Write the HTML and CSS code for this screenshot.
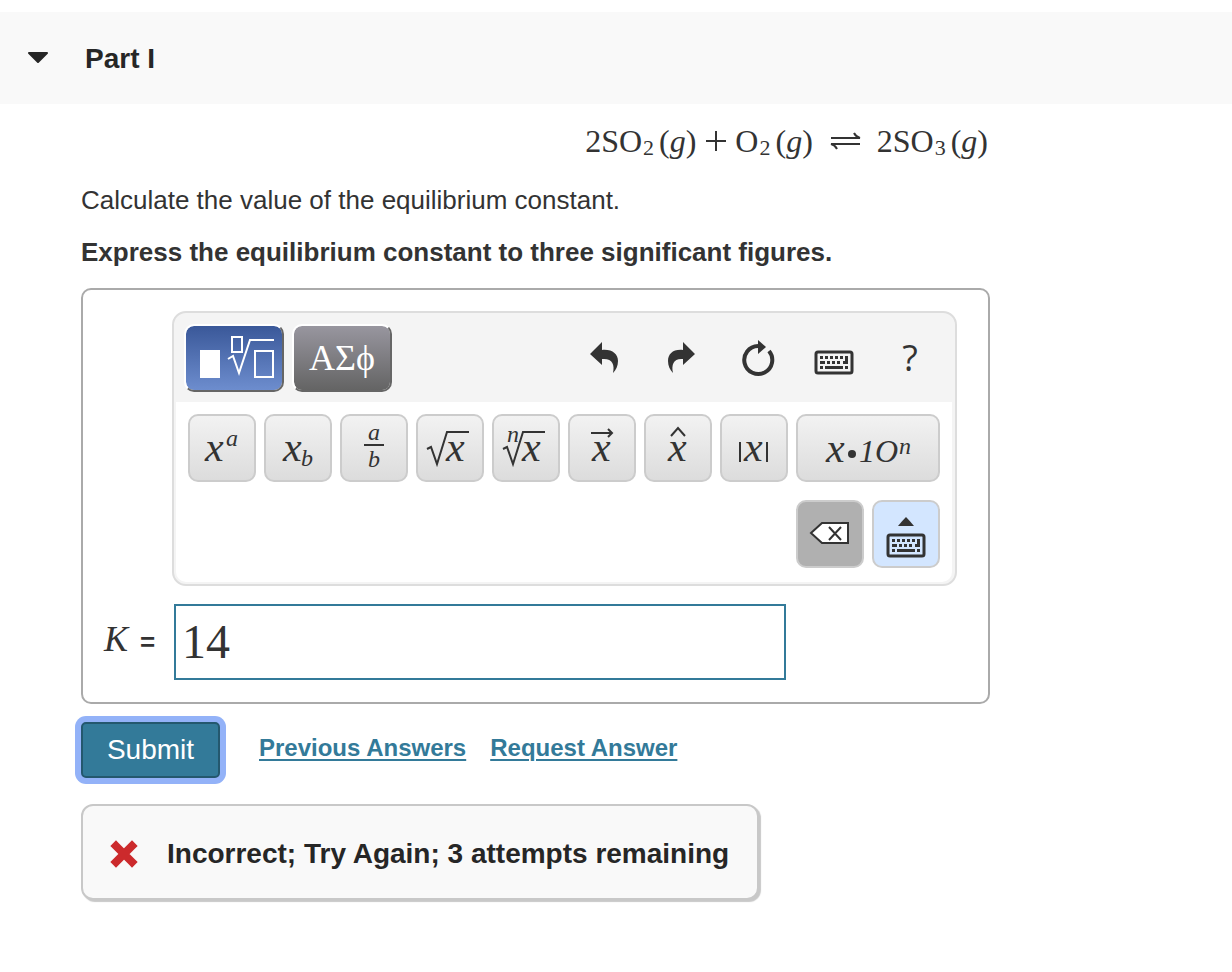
FILE: index.html
```html
<!DOCTYPE html>
<html lang="en">
<head>
<meta charset="utf-8">
<meta name="viewport" content="width=device-width, initial-scale=1">
<title>Part I</title>
<link rel="stylesheet" href="styles.css">
</head>
<body>
<svg class="defs" aria-hidden="true">
  <symbol id="keyboard" viewBox="0 0 40 26">
    <rect x="2" y="2" width="36" height="21" rx="2" fill="none" stroke="currentColor" stroke-width="3"/>
    <path fill="currentColor" d="M6 6h3v3h-3zM11 6h3v3h-3zM16 6h3v3h-3zM21 6h3v3h-3zM26 6h3v3h-3zM31 6h3v8h-5v-3h2zM6 11h5v3H6zM13 11h3v3h-3zM18 11h3v3h-3zM23 11h3v3h-3zM6 16h3v3H6zM11 16h18v3H11zM31 16h3v3h-3z"/>
  </symbol>
</svg>
<header class="part-header">
  <button class="part-toggle" type="button" aria-label="Collapse Part I">
    <svg width="22" height="14" viewBox="0 0 22 14"><path d="M2 2h18l-9 9z" fill="#262626" stroke="#262626" stroke-width="2" stroke-linejoin="round"/></svg>
  </button>
  <h1 class="part-title">Part I</h1>
</header>
<main class="content">
  <div class="equation">
    <span>2SO</span><span class="eq-sub">2</span><span class="eq-state">(<i>g</i>)</span>
    <svg class="eq-plus" width="22" height="22" viewBox="0 0 22 22"><path d="M11 1v20M1 11h20" stroke="#333" stroke-width="2"/></svg>
    <span>O</span><span class="eq-sub">2</span><span class="eq-state">(<i>g</i>)</span>
    <svg class="eq-arrows" width="31" height="18" viewBox="0 0 31 18"><path d="M1 6h29q-4-1-6-5M30 12H1q4 1 6 5" fill="none" stroke="#333" stroke-width="2"/></svg>
    <span>2SO</span><span class="eq-sub">3</span><span class="eq-state">(<i>g</i>)</span>
  </div>
  <p class="prompt">Calculate the value of the equilibrium constant.</p>
  <p class="prompt prompt-strong">Express the equilibrium constant to three significant figures.</p>

  <form class="answer" id="answer">
    <div class="panel">
      <div class="panel-bar">
        <div class="tabs">
          <button class="tab tab-active" type="button" aria-label="Templates">
            <svg width="96" height="64" viewBox="0 0 96 64" fill="none" stroke="#fff" stroke-width="2">
              <rect x="14" y="24" width="20" height="28" fill="#fff" stroke="none"/>
              <rect x="46" y="11" width="10" height="15"/>
              <rect x="69" y="25" width="18" height="26"/>
              <path d="M42 33l5-3 6 17 11-33h24"/>
            </svg>
          </button>
          <button class="tab" type="button">ΑΣϕ</button>
        </div>
        <div class="tools">
          <button class="tool" type="button" aria-label="Undo">
            <svg width="64" height="66" viewBox="0 0 64 66"><path fill="#333" d="M16 29L28 17v8C38 24 44 29 44 36c0 5-2 9-5 12 2-9-1-15-11-14v6z"/></svg>
          </button>
          <button class="tool" type="button" aria-label="Redo">
            <svg width="64" height="66" viewBox="0 0 64 66"><path fill="#333" d="M45 29L33 17v8C23 24 18 29 18 36c0 5 2 9 5 12-2-9 1-15 10-14v6z"/></svg>
          </button>
          <button class="tool" type="button" aria-label="Reset">
            <svg width="64" height="66" viewBox="0 0 64 66"><path d="M43 26A14 14 0 1 1 32 21" fill="none" stroke="#333" stroke-width="4"/><path d="M32 15l8 7-8 7z" fill="#333"/></svg>
          </button>
          <button class="tool tool-keys" type="button" aria-label="Keyboard shortcuts">
            <svg width="40" height="26"><use href="#keyboard"/></svg>
          </button>
          <button class="tool tool-help" type="button">?</button>
        </div>
      </div>
      <div class="panel-body">
        <div class="keys">
          <button class="key" type="button" aria-label="Superscript"><svg width="64" height="64" viewBox="0 0 64 64"><text x="15" y="45" class="glyph">x</text><text x="36" y="30" class="glyph-small">a</text></svg></button>
          <button class="key" type="button" aria-label="Subscript"><svg width="64" height="64" viewBox="0 0 64 64"><text x="17" y="45" class="glyph">x</text><text x="35" y="50" class="glyph-small">b</text></svg></button>
          <button class="key" type="button" aria-label="Fraction"><svg width="64" height="64" viewBox="0 0 64 64"><text x="26" y="24" class="glyph-small">a</text><path d="M22 29h20" class="line"/><text x="26" y="51" class="glyph-small">b</text></svg></button>
          <button class="key" type="button" aria-label="Square root"><svg width="64" height="64" viewBox="0 0 64 64"><path d="M9 33l4-2 6 17 10-32h22" class="line"/><text x="28" y="45" class="glyph">x</text></svg></button>
          <button class="key" type="button" aria-label="Nth root"><svg width="64" height="64" viewBox="0 0 64 64"><text x="13" y="26" class="glyph-small">n</text><path d="M9 33l4-2 6 17 10-32h22" class="line"/><text x="28" y="45" class="glyph">x</text></svg></button>
          <button class="key" type="button" aria-label="Vector"><svg width="64" height="64" viewBox="0 0 64 64"><path d="M21 17h21M38 13l4 4-4 4" class="line-thin"/><text x="22" y="45" class="glyph">x</text></svg></button>
          <button class="key" type="button" aria-label="Hat"><svg width="64" height="64" viewBox="0 0 64 64"><path d="M25 20l7-8 7 8" class="line-thin"/><text x="22" y="45" class="glyph">x</text></svg></button>
          <button class="key" type="button" aria-label="Absolute value"><svg width="64" height="64" viewBox="0 0 64 64"><path d="M18 26v20M45 26v20" class="line"/><text x="22" y="45" class="glyph">x</text></svg></button>
          <button class="key key-wide" type="button" aria-label="Scientific notation"><svg width="140" height="64" viewBox="0 0 140 64"><text x="28" y="46" class="glyph">x</text><circle cx="54" cy="38" r="4" fill="#333"/><text x="61" y="46" class="glyph-digit">1O</text><text x="101" y="38" class="glyph-small">n</text></svg></button>
        </div>
        <div class="keys keys-end">
          <button class="key key-delete" type="button" aria-label="Delete"><svg width="64" height="64" viewBox="0 0 64 64"><path d="M13 31l11-10h26v20H24z" fill="#fff" stroke="#333" stroke-width="2"/><path d="M31 25l12 13M43 25L31 38" class="line"/></svg></button>
          <button class="key key-toggle" type="button" aria-label="Show keyboard">
            <svg width="16" height="10" viewBox="0 0 16 10"><path d="M0 9q4-5 8-9 4 4 8 9z" fill="#333"/></svg>
            <svg width="40" height="26"><use href="#keyboard"/></svg>
          </button>
        </div>
      </div>
    </div>
    <div class="entry">
      <label class="entry-label" for="k"><i>K</i><span>=</span></label>
      <input class="entry-input" id="k" type="text" value="14">
    </div>
  </form>

  <div class="actions">
    <button class="submit" type="submit" form="answer">Submit</button>
    <a class="link" href="#">Previous Answers</a>
    <a class="link" href="#">Request Answer</a>
  </div>

  <div class="feedback" role="alert">
    <svg width="28" height="28" viewBox="0 0 28 28"><path d="M6 6l16 16M22 6L6 22" stroke="#cc2a2c" stroke-width="8" stroke-linecap="square"/></svg>
    <span>Incorrect; Try Again; 3 attempts remaining</span>
  </div>
</main>
</body>
</html>
```
FILE: styles.css
```css
* { box-sizing: border-box; }
body {
  margin: 0;
  padding: 12px 0 32px;
  background: #fff;
  color: #333;
  font-family: "Liberation Sans", Arial, sans-serif;
  font-size: 26px;
}
button { font: inherit; color: inherit; padding: 0; border: 0; background: none; cursor: pointer; }
svg { display: block; flex: none; }
.defs { position: absolute; width: 0; height: 0; }

.part-header {
  display: flex;
  align-items: center;
  gap: 36px;
  height: 92px;
  padding: 0 27px;
  background: #f9f9f9;
  color: #262626;
}
.part-title { margin: 0; padding-top: 2px; font-size: 28px; line-height: 32px; }

.content { max-width: 990px; padding-left: 81px; }

.equation {
  display: flex;
  justify-content: flex-end;
  align-items: center;
  height: 76px;
  padding: 0 2px 2px 0;
  font-family: "Liberation Serif", "Times New Roman", serif;
  font-size: 32px;
}
.eq-sub { margin: 14px 5px 0 1px; font-size: 22px; }
.eq-plus { margin: 0 8px 0 9px; }
.eq-arrows { margin: 0 16px 0 17px; }

.prompt { margin: 0 0 20px; line-height: 32px; padding-top: 4px; }
.prompt + .prompt { padding-top: 0; }
.prompt-strong { font-weight: bold; }

.answer {
  border: 2px solid #aaa;
  border-radius: 10px;
  padding: 21px 31px 22px 21px;
}
.panel {
  margin-left: 68px;
  border: 2px solid #ddd;
  border-radius: 14px;
  padding: 0 3px 2px 2px;
  background: #f4f4f4;
}
.panel-bar {
  display: flex;
  justify-content: space-between;
  align-items: center;
  height: 89px;
  padding: 0 10px 0 8px;
}
.tabs { display: flex; gap: 8px; }
.tab {
  width: 100px;
  height: 68px;
  border: 2px solid;
  border-color: #fff #666 #666 #fff;
  border-radius: 10px;
  background: linear-gradient(#98969f, #646464) padding-box;
  color: #fff;
  font-family: "Liberation Serif", "Times New Roman", serif;
  font-size: 36px;
  line-height: 60px;
}
.tab-active { background: linear-gradient(#3a5899, #6d8dce) padding-box; }
.tools { display: flex; gap: 12px; }
.tool { display: flex; align-items: center; justify-content: center; width: 64px; height: 66px; }
.tool-keys { padding-top: 10px; }
.tool-help { font-family: "Open Sans", sans-serif; font-size: 36px; line-height: 60px; }

.panel-body {
  padding: 12px;
  padding-bottom: 14px;
  border-bottom-right-radius: 10px;
  border-bottom-left-radius: 10px;
  background: #fff;
}
.keys { display: flex; gap: 8px; }
.keys-end { justify-content: flex-end; margin-top: 18px; }
.key {
  width: 68px;
  height: 68px;
  flex: none;
  border: 2px solid #ccc;
  border-radius: 10px;
  background: linear-gradient(#f2f2f2, #dcdcdc);
}
.key-wide { width: 144px; }
.key-delete { background: #b0b0b0; }
.key-toggle {
  display: flex;
  flex-direction: column;
  align-items: center;
  gap: 6px;
  padding-top: 15px;
  background: #d3e6ff;
}
.glyph, .glyph-small, .glyph-digit {
  font-family: "Liberation Serif", "Times New Roman", serif;
  font-style: italic;
  fill: #333;
}
.glyph { font-size: 42px; }
.glyph-small { font-size: 24px; }
.glyph-digit { font-size: 32px; }
.line { fill: none; stroke: #333; stroke-width: 2px; }
.line-thin { fill: none; stroke: #333; stroke-width: 2px; }

.entry { display: flex; align-items: center; margin-top: 18px; }
.entry-label { display: flex; align-items: baseline; gap: 12px; width: 70px; padding-bottom: 6px; font-weight: bold; font-size: 26px; }
.entry-label i {
  font-family: "Liberation Serif", "Times New Roman", serif;
  font-size: 36px;
  font-weight: normal;
}
.entry-input {
  flex: 0 1 612px;
  min-width: 0;
  height: 76px;
  border: 2px solid #337a99;
  border-radius: 0;
  padding: 0 6px 2px;
  background: #fff;
  color: #333;
  font-family: "Liberation Serif", "Times New Roman", serif;
  font-size: 48px;
}

.actions { display: flex; align-items: center; margin-top: 18px; }
.submit {
  width: 139px;
  height: 56px;
  margin-right: 39px;
  border: 2px solid #24586e;
  border-radius: 5px;
  box-shadow: 0 0 0 6px #93b2f8;
  background: #337a99;
  color: #fff;
  font-size: 28px;
}
.link {
  margin-right: 24px;
  padding-bottom: 4px;
  color: #337a99;
  font-size: 24px;
  font-weight: bold;
  text-decoration-thickness: 2px;
  text-underline-offset: 3px;
}

.feedback {
  display: flex;
  align-items: center;
  gap: 29px;
  width: fit-content;
  height: 96px;
  margin-top: 26px;
  padding: 4px 28px 0 27px;
  border: 2px solid #c8c8c8;
  border-radius: 12px;
  box-shadow: 2px 2px 1px #c8c8c8;
  background: #f9f9f9;
  color: #262626;
  font-size: 28px;
  font-weight: bold;
}
```
